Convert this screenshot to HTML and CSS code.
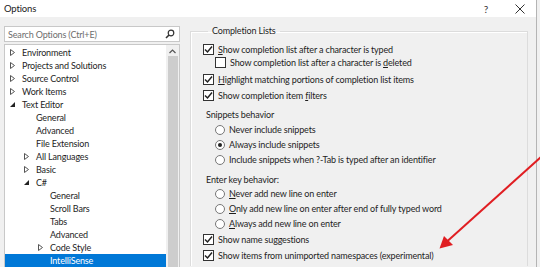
FILE: index.html
```html
<!DOCTYPE html>
<html lang="en">
<head>
    <meta charset="UTF-8">
    <title>Options</title>
    <link rel="stylesheet" href="styles.css">
</head>
<body>
    <div class="window">
        <div class="titlebar">
            <span class="title">Options</span>
            <span class="help">?</span>
            <svg class="close" width="10" height="10" viewBox="0 0 10 10"><path d="M0.5 0.5 L9.5 9.5 M9.5 0.5 L0.5 9.5" stroke="#333" stroke-width="1"/></svg>
        </div>

        <div class="main">
            <!-- left: search + tree -->
            <div class="sidebar">
                <div class="search">
                    <span class="search-text">Search Options (Ctrl+E)</span>
                    <svg width="10" height="10" viewBox="0 0 10 10"><circle cx="6" cy="4" r="2.8" fill="none" stroke="#333" stroke-width="1.2"/><path d="M4 6 L1 9" stroke="#333" stroke-width="1.6"/></svg>
                </div>
                <div class="tree">
                    <div class="tree-items">
                        <div class="node lvl0"><span class="tog"><svg width="5" height="7" viewBox="0 0 5 7"><path d="M0.5 0.5 L4.5 3.5 L0.5 6.5 Z" fill="none" stroke="#555"/></svg></span>Environment</div>
                        <div class="node lvl0"><span class="tog"><svg width="5" height="7" viewBox="0 0 5 7"><path d="M0.5 0.5 L4.5 3.5 L0.5 6.5 Z" fill="none" stroke="#555"/></svg></span>Projects and Solutions</div>
                        <div class="node lvl0"><span class="tog"><svg width="5" height="7" viewBox="0 0 5 7"><path d="M0.5 0.5 L4.5 3.5 L0.5 6.5 Z" fill="none" stroke="#555"/></svg></span>Source Control</div>
                        <div class="node lvl0"><span class="tog"><svg width="5" height="7" viewBox="0 0 5 7"><path d="M0.5 0.5 L4.5 3.5 L0.5 6.5 Z" fill="none" stroke="#555"/></svg></span>Work Items</div>
                        <div class="node lvl0"><span class="tog"><svg width="5" height="5" viewBox="0 0 5 5"><path d="M5 0 L5 5 L0 5 Z" fill="#222"/></svg></span>Text Editor</div>
                        <div class="node lvl1"><span class="tog"></span>General</div>
                        <div class="node lvl1"><span class="tog"></span>Advanced</div>
                        <div class="node lvl1"><span class="tog"></span>File Extension</div>
                        <div class="node lvl1"><span class="tog"><svg width="5" height="7" viewBox="0 0 5 7"><path d="M0.5 0.5 L4.5 3.5 L0.5 6.5 Z" fill="none" stroke="#555"/></svg></span>All Languages</div>
                        <div class="node lvl1"><span class="tog"><svg width="5" height="7" viewBox="0 0 5 7"><path d="M0.5 0.5 L4.5 3.5 L0.5 6.5 Z" fill="none" stroke="#555"/></svg></span>Basic</div>
                        <div class="node lvl1"><span class="tog"><svg width="5" height="5" viewBox="0 0 5 5"><path d="M5 0 L5 5 L0 5 Z" fill="#222"/></svg></span>C#</div>
                        <div class="node lvl2"><span class="tog"></span>General</div>
                        <div class="node lvl2"><span class="tog"></span>Scroll Bars</div>
                        <div class="node lvl2"><span class="tog"></span>Tabs</div>
                        <div class="node lvl2"><span class="tog"></span>Advanced</div>
                        <div class="node lvl2"><span class="tog"><svg width="5" height="7" viewBox="0 0 5 7"><path d="M0.5 0.5 L4.5 3.5 L0.5 6.5 Z" fill="none" stroke="#555"/></svg></span>Code Style</div>
                        <div class="node lvl2 selected"><span class="tog"></span>IntelliSense</div>
                    </div>
                    <div class="scrollbar">
                        <svg class="up" width="7" height="5" viewBox="0 0 7 5"><path d="M0.5 4 L3.5 1 L6.5 4" fill="none" stroke="#555" stroke-width="1.2"/></svg>
                        <div class="thumb"></div>
                    </div>
                </div>
            </div>

            <!-- right: settings page -->
            <div class="page">
                <fieldset class="group">
                    <legend>Completion Lists</legend>
                    <div class="opt">
                        <span class="check on"><svg width="9" height="9" viewBox="0 0 9 9"><path d="M1 4.5 L3.5 7 L8 1.5" fill="none" stroke="#222" stroke-width="1.5"/></svg></span>
                        <span><u>S</u>how completion list after a character is typed</span>
                    </div>
                    <div class="opt sub tight">
                        <span class="check"></span>
                        <span>Show completion list after a character is <u>d</u>eleted</span>
                    </div>
                    <div class="opt gap1">
                        <span class="check on"><svg width="9" height="9" viewBox="0 0 9 9"><path d="M1 4.5 L3.5 7 L8 1.5" fill="none" stroke="#222" stroke-width="1.5"/></svg></span>
                        <span><u>H</u>ighlight matching portions of completion list items</span>
                    </div>
                    <div class="opt">
                        <span class="check on"><svg width="9" height="9" viewBox="0 0 9 9"><path d="M1 4.5 L3.5 7 L8 1.5" fill="none" stroke="#222" stroke-width="1.5"/></svg></span>
                        <span>Show completion item <u>f</u>ilters</span>
                    </div>

                    <div class="label snip">Snippets behavior</div>
                    <div class="radio-row first">
                        <span class="radio"></span>
                        <span>Never include snippets</span>
                    </div>
                    <div class="radio-row">
                        <span class="radio on"></span>
                        <span>Always include snippets</span>
                    </div>
                    <div class="radio-row">
                        <span class="radio"></span>
                        <span>Include snippets when ?-Tab is typed after an identifier</span>
                    </div>

                    <div class="label enter">Enter key behavior:</div>
                    <div class="radio-row first2">
                        <span class="radio"></span>
                        <span><u>N</u>ever add new line on enter</span>
                    </div>
                    <div class="radio-row">
                        <span class="radio"></span>
                        <span><u>O</u>nly add new line on enter after end of fully typed word</span>
                    </div>
                    <div class="radio-row">
                        <span class="radio"></span>
                        <span><u>A</u>lways add new line on enter</span>
                    </div>

                    <div class="opt">
                        <span class="check on"><svg width="9" height="9" viewBox="0 0 9 9"><path d="M1 4.5 L3.5 7 L8 1.5" fill="none" stroke="#222" stroke-width="1.5"/></svg></span>
                        <span>Show name su<u>g</u>gestions</span>
                    </div>
                    <div class="opt">
                        <span class="check on"><svg width="9" height="9" viewBox="0 0 9 9"><path d="M1 4.5 L3.5 7 L8 1.5" fill="none" stroke="#222" stroke-width="1.5"/></svg></span>
                        <span>Show items from unimported namespaces (experimental)</span>
                    </div>
                </fieldset>
            </div>
        </div>

        <!-- red annotation arrow drawn over the screenshot -->
        <svg class="arrow" width="540" height="267" viewBox="0 0 540 267">
            <path d="M541 157 L447 241.5" stroke="#e01e22" stroke-width="2" fill="none"/>
            <path d="M439.5 248.5 L444 236 L453 245 Z" fill="#e01e22"/>
        </svg>
    </div>
</body>
</html>
```

FILE: styles.css
```css
html, body {
    margin: 0;
    padding: 0;
}

body {
    width: 540px;
    height: 267px;
    overflow: hidden;
    background: #f0f0f0;
    font-family: Lato, "Noto Sans", sans-serif;
    font-size: 9px;
    letter-spacing: -0.15px;
    color: #1e1e1e;
}

.window {
    position: relative;
    width: 536px;
    height: 267px;
    border-right: 1px solid #b4b4b4;
    background: #f0f0f0;
}

.titlebar {
    height: 17px;
    background: #ffffff;
    display: flex;
    align-items: center;
    padding-left: 4px;
}

.title {
    flex: 1;
    font-size: 9.5px;
    color: #222;
}

.help {
    font-size: 10px;
    color: #333;
    margin-right: 27px;
}

.close {
    margin-right: 11px;
}

.main {
    display: flex;
    height: 250px;
}

.sidebar {
    width: 176px;
    margin-left: 4px;
    padding-top: 9px;
    display: flex;
    flex-direction: column;
}

.search {
    height: 14px;
    border: 1px solid #c8c8c8;
    background: #fff;
    display: flex;
    align-items: center;
    padding: 0 4px 0 3px;
}

.search-text {
    flex: 1;
    color: #6d6d6d;
}

.tree {
    margin-top: 2px;
    flex: 1;
    border: 1px solid #c8c8c8;
    border-bottom: none;
    background: #fff;
    display: flex;
    overflow: hidden;
}

.tree-items {
    flex: 1;
    padding-top: 1px;
}

.node {
    height: 13px;
    line-height: 13px;
    display: flex;
    align-items: center;
    white-space: nowrap;
}

.lvl0 { padding-left: 4px; }
.lvl1 { padding-left: 18px; }
.lvl2 { padding-left: 32px; }

.tog {
    width: 13px;
    display: flex;
    align-items: center;
    padding-left: 1px;
    box-sizing: border-box;
}

.node.selected {
    background: #0078d7;
    color: #fff;
}

.scrollbar {
    width: 13px;
    background: #f0f0f0;
    display: flex;
    flex-direction: column;
    align-items: center;
}

.scrollbar .up {
    margin-top: 4px;
    height: 5px;
}

.thumb {
    margin-top: 2px;
    width: 10px;
    flex: 1;
    background: #cdcdcd;
}

.page {
    flex: 1;
    padding-left: 10px;
    padding-right: 8px;
}

.group {
    margin: 6px 0 0 0;
    padding: 2px 0 0 12px;
    height: 240px;
    border: 1px solid #dcdcdc;
    border-bottom: none;
    box-shadow: inset 1px 1px 0 #fff;
}

.group legend {
    margin-left: 5px;
    padding: 0 4px;
    line-height: 16px;
}

.opt {
    height: 16px;
    display: flex;
    align-items: center;
    white-space: nowrap;
}

.opt.sub { padding-left: 12px; }
.opt.tight { margin-top: -3px; }
.opt.gap1 { margin-top: 1px; }

.check {
    width: 9px;
    height: 9px;
    border: 1px solid #333;
    background: #fff;
    margin-right: 4px;
    display: flex;
    align-items: center;
    justify-content: center;
}

.label {
    height: 16px;
    line-height: 16px;
    padding-left: 3px;
}

.label.snip { margin-top: 4px; }
.label.enter { margin-top: 5px; }

.radio-row {
    height: 15px;
    display: flex;
    align-items: center;
    padding-left: 12px;
    white-space: nowrap;
}

.radio-row.first { margin-top: -1px; }
.radio-row.first2 { margin-top: -2px; }

.radio {
    width: 8px;
    height: 8px;
    border: 1px solid #777;
    border-radius: 50%;
    background: #fff;
    margin-right: 4px;
    display: flex;
    align-items: center;
    justify-content: center;
}

.radio.on::after {
    content: "";
    width: 4px;
    height: 4px;
    border-radius: 50%;
    background: #222;
}

.arrow {
    position: absolute;
    left: 0;
    top: 0;
    pointer-events: none;
}
```
